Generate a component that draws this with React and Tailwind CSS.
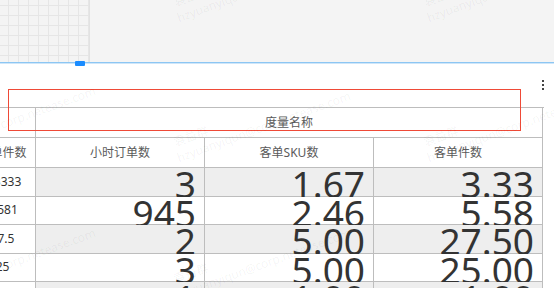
import React from 'react';

const rows = [
  { first: '3.3333', orders: '3', sku: '1.67', items: '3.33' },
  { first: '5.581', orders: '945', sku: '2.46', items: '5.58' },
  { first: '27.5', orders: '2', sku: '5.00', items: '27.50' },
  { first: '25', orders: '3', sku: '5.00', items: '25.00' },
  { first: '1', orders: '1', sku: '1.00', items: '1.00' },
];

const marks = [
  { left: -75, top: 160 },
  { left: 180, top: 25 },
  { left: 180, top: 165 },
  { left: 430, top: 25 },
  { left: 430, top: 165 },
  { left: 180, top: 302 },
  { left: -75, top: 302 },
];

function Watermark({ left, top }) {
  return (
    <div
      className="absolute pointer-events-none origin-bottom-left -rotate-[20deg] text-[12px] leading-[14px] text-black/[0.05] whitespace-nowrap"
      style={{ left, top: top - 30 }}
    >
      <div className="pl-[2px]">袁益群</div>
      <div className="mt-[2px]">hzyuanyiqun@corp.netease.com</div>
    </div>
  );
}

function DotsIcon() {
  return (
    <svg width="4" height="10" viewBox="0 0 4 10" className="fill-[#444]">
      <rect x="1" y="0" width="2" height="2" />
      <rect x="1" y="4" width="2" height="2" />
      <rect x="1" y="8" width="2" height="2" />
    </svg>
  );
}

export default function App() {
  return (
    <div className="relative w-[554px] h-[288px] overflow-hidden bg-white font-['Noto_Sans','Noto_Sans_CJK_SC',sans-serif]">
      {/* canvas strip */}
      <div className="flex h-[62px] bg-[#f4f4f4]">
        <div className="w-[90px] h-full border-r border-[#e2e2e2] bg-[linear-gradient(to_right,#e6e6e6_1px,transparent_1px),linear-gradient(to_bottom,#e6e6e6_1px,transparent_1px)] bg-[size:10px_10px] bg-[position:8px_5px]" />
        <div className="flex-1" />
      </div>
      <div className="h-[1px] bg-[#8cc6f3]" />
      <div className="h-[1px] bg-[#cfe6f9]" />

      {/* toolbar */}
      <div className="flex justify-end h-[43px] pr-[9px] pt-[16px]">
        <DotsIcon />
      </div>

      {/* table */}
      <div className="ml-[-30px] w-[574px] text-[12px] text-[#5a5a5a]">
        <div className="grid grid-cols-[66px_169px_169px_169px] border-t border-[#bdbdbd]">
          <div className="h-[30px] border-r border-b border-[#bdbdbd]" />
          <div className="col-span-3 h-[30px] flex items-center justify-center border-r border-b border-[#bdbdbd]">
            度量名称
          </div>

          <div className="h-[30px] flex items-center justify-center border-r border-b border-[#bdbdbd] whitespace-nowrap">客单件数</div>
          <div className="h-[30px] flex items-center justify-center border-r border-b border-[#bdbdbd]">小时订单数</div>
          <div className="h-[30px] flex items-center justify-center border-r border-b border-[#bdbdbd]">客单SKU数</div>
          <div className="h-[30px] flex items-center justify-center border-r border-b border-[#bdbdbd]">客单件数</div>

          {rows.map((r, i) => {
            const bg = i % 2 === 0 ? 'bg-[#eeeeee]' : 'bg-white';
            return (
              <React.Fragment key={i}>
                <div className="h-[28.5px] flex items-center justify-center border-r border-b border-[#bdbdbd] text-[#333] whitespace-nowrap">
                  {r.first}
                </div>
                {[r.orders, r.sku, r.items].map((v, j) => (
                  <div
                    key={j}
                    className={`h-[28.5px] border-r border-b border-[#bdbdbd] ${bg} text-right pr-[8px] text-[37px] leading-[31px] text-[#333] whitespace-nowrap`}
                  >
                    {v}
                  </div>
                ))}
              </React.Fragment>
            );
          })}
        </div>
      </div>

      {/* selection frame */}
      <div className="absolute left-[8px] top-[89px] w-[513px] h-[42px] border border-[#ef4a37]" />
      {/* resize handle */}
      <div className="absolute left-[75px] top-[61px] w-[10px] h-[5px] bg-[#1a8cff] rounded-[1px]" />

      {marks.map((m, i) => (
        <Watermark key={i} left={m.left} top={m.top} />
      ))}
    </div>
  );
}
